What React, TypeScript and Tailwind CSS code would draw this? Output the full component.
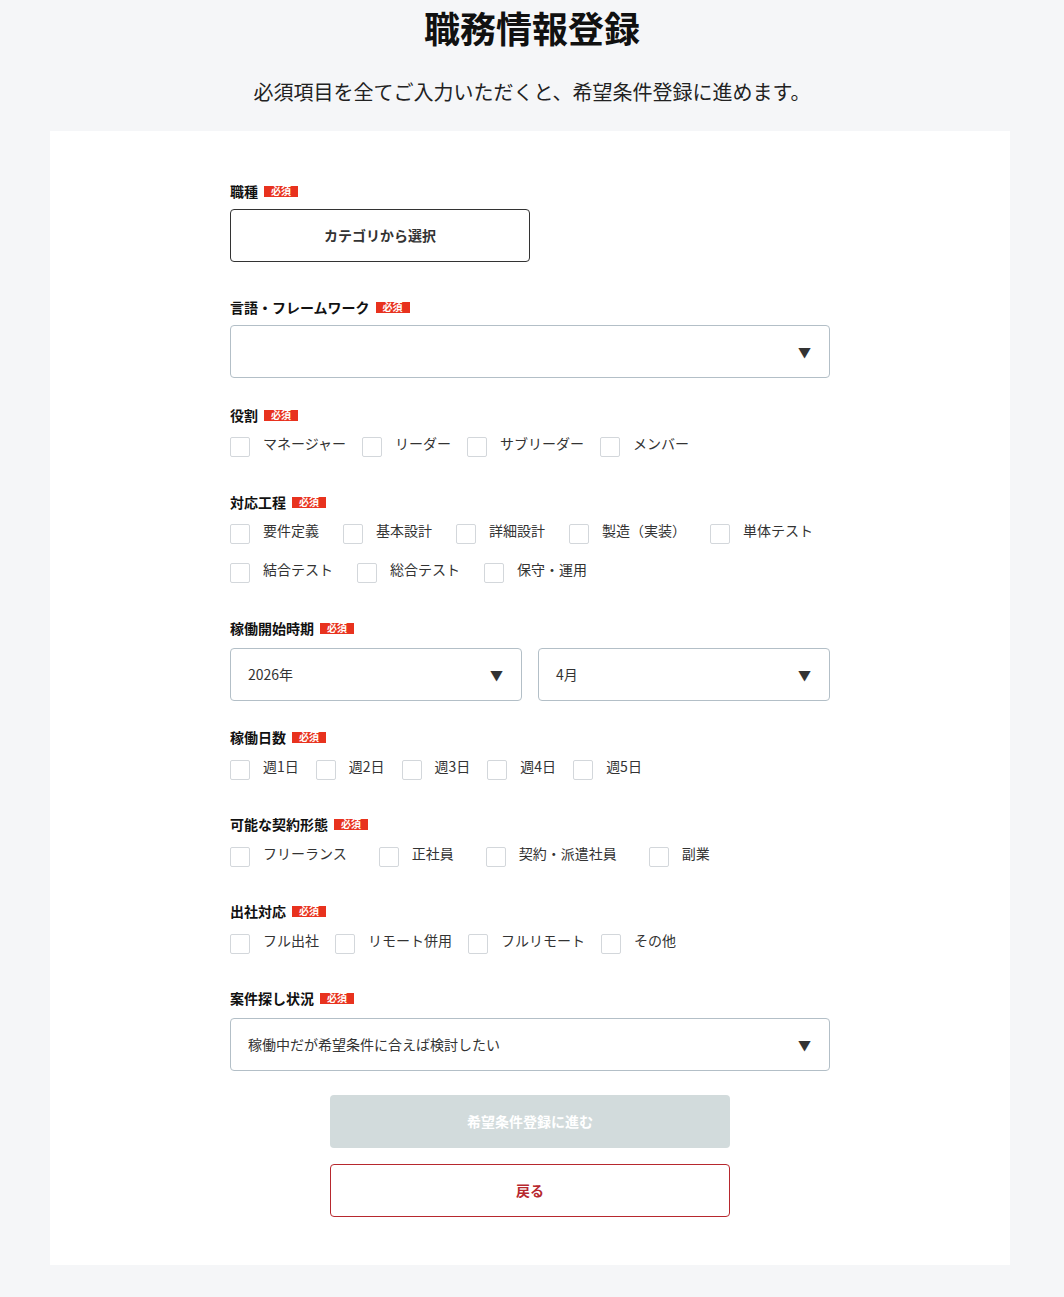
import React from 'react';

const font = { fontFamily: '"Noto Sans CJK JP", "Noto Sans", sans-serif' };

const Badge = () => (
  <span className="inline-flex items-center justify-center w-[34px] h-[11px] bg-[#e8321e] text-white text-[10px] leading-none ml-[6px]">
    必須
  </span>
);

const Label: React.FC<{ text: string; mb?: string }> = ({ text, mb = 'mb-[9px]' }) => (
  <div className={`flex items-center h-[18px] ${mb} text-[14px] font-bold text-[#111]`}>
    {text}
    <Badge />
  </div>
);

const Arrow = () => <span className="text-[#333] text-[13px] leading-none">▼</span>;

const SelectBox: React.FC<{ value?: string; className?: string }> = ({ value, className = '' }) => (
  <div
    className={`flex items-center justify-between h-[53px] border border-[#b3bfc7] rounded bg-white pl-[17px] pr-[18px] text-[14px] text-[#333] ${className}`}
  >
    <span>{value}</span>
    <Arrow />
  </div>
);

const CheckRow: React.FC<{ items: string[]; gap: string }> = ({ items, gap }) => (
  <div className={`flex flex-wrap gap-y-[15px] ${gap}`}>
    {items.map((item) => (
      <label key={item} className="flex items-start h-[24px]">
        <span className="w-5 h-5 mt-1 border border-[#d3d7db] rounded-[2px] bg-white" />
        <span className="ml-[13px] text-[14px] leading-5 text-[#333]">{item}</span>
      </label>
    ))}
  </div>
);

export default function App() {
  return (
    <div className="min-h-screen bg-[#f5f6f8] pb-[32px]" style={font}>
      <h1 className="text-center text-[36px] leading-[54px] font-bold text-[#111]">職務情報登録</h1>
      <p className="mt-[24px] mb-[25px] text-center text-[20px] leading-[28px] text-[#222]">
        必須項目を全てご入力いただくと、希望条件登録に進めます。
      </p>

      <div className="w-[960px] ml-[50px] bg-white pt-[51px] pb-[48px]">
        <div className="w-[600px] mx-auto">
          <section className="mb-[36px]">
            <Label text="職種" />
            <button className="w-[300px] h-[53px] border border-[#333] rounded text-[14px] font-bold text-[#333]">
              カテゴリから選択
            </button>
          </section>

          <section className="mb-[28px]">
            <Label text="言語・フレームワーク" />
            <SelectBox />
          </section>

          <section className="mb-[36px]">
            <Label text="役割" />
            <CheckRow gap="gap-x-[16px]" items={['マネージャー', 'リーダー', 'サブリーダー', 'メンバー']} />
          </section>

          <section className="mb-[36px]">
            <Label text="対応工程" />
            <CheckRow
              gap="gap-x-[24px]"
              items={['要件定義', '基本設計', '詳細設計', '製造（実装）', '単体テスト', '結合テスト', '総合テスト', '保守・運用']}
            />
          </section>

          <section className="mb-[27px]">
            <Label text="稼働開始時期" mb="mb-[11px]" />
            <div className="flex gap-4">
              <SelectBox value="2026年" className="flex-1" />
              <SelectBox value="4月" className="flex-1" />
            </div>
          </section>

          <section className="mb-[35px]">
            <Label text="稼働日数" mb="mb-[10px]" />
            <CheckRow gap="gap-x-[17px]" items={['週1日', '週2日', '週3日', '週4日', '週5日']} />
          </section>

          <section className="mb-[35px]">
            <Label text="可能な契約形態" mb="mb-[10px]" />
            <CheckRow gap="gap-x-[32px]" items={['フリーランス', '正社員', '契約・派遣社員', '副業']} />
          </section>

          <section className="mb-[35px]">
            <Label text="出社対応" mb="mb-[10px]" />
            <CheckRow gap="gap-x-[16px]" items={['フル出社', 'リモート併用', 'フルリモート', 'その他']} />
          </section>

          <section>
            <Label text="案件探し状況" mb="mb-[11px]" />
            <SelectBox value="稼働中だが希望条件に合えば検討したい" />
          </section>

          <div className="flex flex-col items-center mt-[24px] gap-4">
            <button className="w-[400px] h-[53px] rounded bg-[#d2dbdc] text-white text-[14px] font-bold">
              希望条件登録に進む
            </button>
            <button className="w-[400px] h-[53px] rounded border border-[#b7282e] bg-white text-[#b7282e] text-[14px] font-bold">
              戻る
            </button>
          </div>
        </div>
      </div>
    </div>
  );
}
